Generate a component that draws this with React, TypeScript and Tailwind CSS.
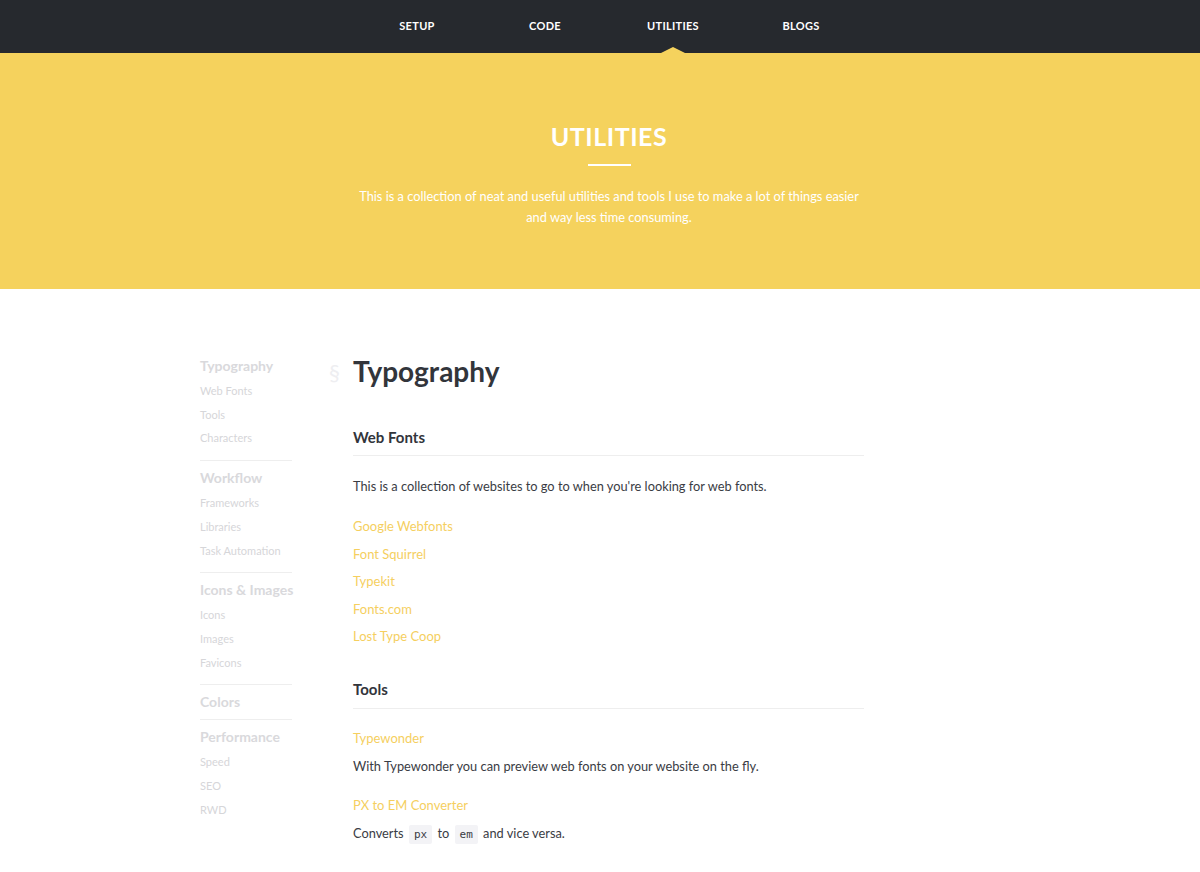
import React from "react";

type NavItem = { label: string; active?: boolean };

const navItems: NavItem[] = [
  { label: "SETUP" },
  { label: "CODE" },
  { label: "UTILITIES", active: true },
  { label: "BLOGS" },
];

type SideGroup = { title: string; items: string[] };

const sideGroups: SideGroup[] = [
  { title: "Typography", items: ["Web Fonts", "Tools", "Characters"] },
  { title: "Workflow", items: ["Frameworks", "Libraries", "Task Automation"] },
  { title: "Icons & Images", items: ["Icons", "Images", "Favicons"] },
  { title: "Colors", items: [] },
  { title: "Performance", items: ["Speed", "SEO", "RWD"] },
];

const webFonts = [
  "Google Webfonts",
  "Font Squirrel",
  "Typekit",
  "Fonts.com",
  "Lost Type Coop",
];

const font = "font-['Lato','Open_Sans',sans-serif]";

const Code: React.FC<{ children: React.ReactNode }> = ({ children }) => (
  <code className="mx-[2px] rounded-[2px] bg-[#f3f3f6] px-[5px] py-[3px] font-['DejaVu_Sans_Mono',monospace] text-[11px] text-[#3a3c44]">
    {children}
  </code>
);

const App: React.FC = () => {
  return (
    <div className={`min-h-[872px] bg-white ${font}`}>
      <nav className="flex h-[53px] items-center justify-center bg-[#26292e]">
        <ul className="ml-[18px] flex">
          {navItems.map((item) => (
            <li
              key={item.label}
              className="relative flex h-[53px] w-[128px] items-center justify-center"
            >
              <span className="text-[11px] font-bold tracking-[0.3px] text-white">
                {item.label}
              </span>
              {item.active && (
                <span className="absolute bottom-0 left-1/2 h-0 w-0 -translate-x-1/2 border-x-[12px] border-b-[6px] border-x-transparent border-b-[#f5d25d]" />
              )}
            </li>
          ))}
        </ul>
      </nav>

      <header className="flex h-[236px] flex-col items-center bg-[#f5d25d] pl-[18px] pt-[65px]">
        <h1 className="text-[25px] font-bold leading-[36px] tracking-[0.5px] text-white">
          UTILITIES
        </h1>
        <div className="mt-[10px] h-[2px] w-[43px] bg-white" />
        <p className="mt-[20px] w-[520px] text-center text-[12.8px] leading-[21px] text-white">
          This is a collection of neat and useful utilities and tools I use to make a lot of
          things easier and way less time consuming.
        </p>
      </header>

      <main className="mx-auto flex w-[800px] pt-[66px]">
        <aside className="mt-[1px] w-[92px] shrink-0">
          {sideGroups.map((group, i) => (
            <div
              key={group.title}
              className={
                i < sideGroups.length - 1
                  ? group.items.length > 0
                    ? "mb-[7px] border-b border-[#eeeeee] pb-[10px]"
                    : "mb-[7px] border-b border-[#eeeeee] pb-[7px]"
                  : ""
              }
            >
              <h3 className="whitespace-nowrap text-[14px] font-bold leading-[20px] text-[#d9d9dc]">
                {group.title}
              </h3>
              {group.items.length > 0 && (
                <ul className="mt-[3px]">
                  {group.items.map((it) => (
                    <li key={it} className="text-[11px] leading-[23.7px] text-[#d6d6d9]">
                      {it}
                    </li>
                  ))}
                </ul>
              )}
            </div>
          ))}
        </aside>

        <section className="ml-[61px] w-[511px] text-[#3a3c44]">
          <h1 className="relative -mt-[3px] text-[28px] font-bold leading-[38px] text-[#32353b]">
            <span className="absolute -left-[24px] top-[1px] text-[22px] font-normal text-[#eeeef1]">
              §
            </span>
            Typography
          </h1>

          <h2 className="mt-[37px] border-b border-[#eeeeee] pb-[8px] text-[15px] font-bold leading-[20px] text-[#32353b]">
            Web Fonts
          </h2>
          <p className="mt-[20px] text-[12.8px] leading-[20px]">
            This is a collection of websites to go to when you&apos;re looking for web fonts.
          </p>
          <ul className="mt-[17px]">
            {webFonts.map((w) => (
              <li key={w} className="text-[13px] leading-[27.5px] text-[#f5cf5f]">
                <a href="#">{w}</a>
              </li>
            ))}
          </ul>

          <h2 className="mt-[28px] border-b border-[#eeeeee] pb-[9px] text-[15px] font-bold leading-[20px] text-[#32353b]">
            Tools
          </h2>
          <a href="#" className="mt-[19px] block text-[13px] leading-[20px] text-[#f5cf5f]">
            Typewonder
          </a>
          <p className="mt-[8px] text-[12.8px] leading-[20px]">
            With Typewonder you can preview web fonts on your website on the fly.
          </p>
          <a href="#" className="mt-[19px] block text-[13px] leading-[20px] text-[#f5cf5f]">
            PX to EM Converter
          </a>
          <p className="mt-[8px] text-[12.8px] leading-[20px]">
            Converts <Code>px</Code> to <Code>em</Code> and vice versa.
          </p>
        </section>
      </main>
    </div>
  );
};

export default App;
